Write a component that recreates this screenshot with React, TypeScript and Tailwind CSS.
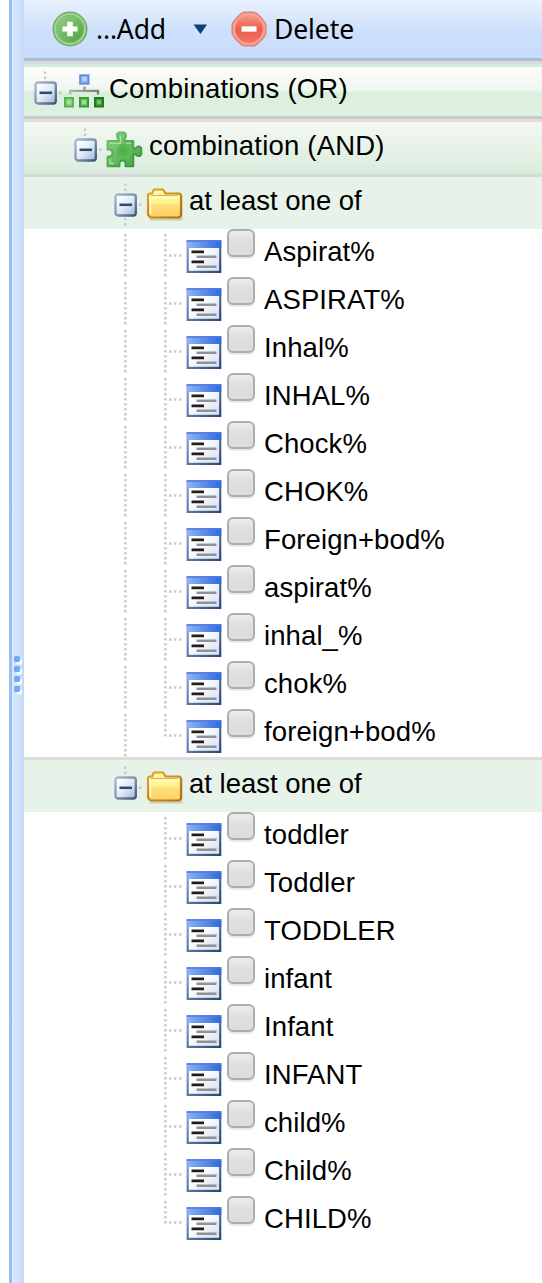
import React from "react";

const choking = [
  "Aspirat%",
  "ASPIRAT%",
  "Inhal%",
  "INHAL%",
  "Chock%",
  "CHOK%",
  "Foreign+bod%",
  "aspirat%",
  "inhal_%",
  "chok%",
  "foreign+bod%",
];

const children = [
  "toddler",
  "Toddler",
  "TODDLER",
  "infant",
  "Infant",
  "INFANT",
  "child%",
  "Child%",
  "CHILD%",
];

function Gradients() {
  return (
    <svg width="0" height="0" className="absolute" aria-hidden="true">
      <defs>
        <linearGradient id="box" x1="0" y1="0" x2="1" y2="1">
          <stop offset="0.1" stopColor="#ffffff" />
          <stop offset="0.5" stopColor="#e4ebf7" />
          <stop offset="1" stopColor="#9db4da" />
        </linearGradient>
        <linearGradient id="boxEdge" x1="0" y1="0" x2="1" y2="1">
          <stop offset="0" stopColor="#a9b8cf" />
          <stop offset="0.5" stopColor="#7e93b2" />
          <stop offset="1" stopColor="#3a557b" />
        </linearGradient>
        <linearGradient id="folder" x1="0" y1="0" x2="0" y2="1">
          <stop offset="0" stopColor="#fffdb0" />
          <stop offset="0.5" stopColor="#fff08a" />
          <stop offset="0.55" stopColor="#ffdf7b" />
          <stop offset="1" stopColor="#ffcf63" />
        </linearGradient>
        <linearGradient id="folderEdge" x1="0" y1="0" x2="1" y2="1">
          <stop offset="0" stopColor="#dfaa2c" />
          <stop offset="1" stopColor="#ad6e08" />
        </linearGradient>
        <linearGradient id="title" x1="0" y1="0" x2="1" y2="0">
          <stop offset="0" stopColor="#8fb3f8" />
          <stop offset="1" stopColor="#2f67dc" />
        </linearGradient>
        <linearGradient id="sheet" x1="0" y1="0" x2="1" y2="1">
          <stop offset="0.4" stopColor="#ffffff" />
          <stop offset="1" stopColor="#cfdcf4" />
        </linearGradient>
        <linearGradient id="sheetEdge" x1="0" y1="0" x2="1" y2="1">
          <stop offset="0" stopColor="#89a8da" />
          <stop offset="1" stopColor="#2a486f" />
        </linearGradient>
        <linearGradient id="puzzle" x1="0" y1="0" x2="1" y2="1">
          <stop offset="0" stopColor="#8bd486" />
          <stop offset="1" stopColor="#43a33f" />
        </linearGradient>
        <radialGradient id="puzzleCore">
          <stop offset="0" stopColor="#49ad43" />
          <stop offset="1" stopColor="#62ba5c" />
        </radialGradient>
        <linearGradient id="puzzleEdge" x1="0" y1="0" x2="1" y2="1">
          <stop offset="0" stopColor="#76c472" />
          <stop offset="1" stopColor="#2d8c31" />
        </linearGradient>
        <linearGradient id="add" x1="0" y1="0" x2="1" y2="1">
          <stop offset="0" stopColor="#98cf86" />
          <stop offset="1" stopColor="#4ba43d" />
        </linearGradient>
        <linearGradient id="remove" x1="0" y1="0" x2="0" y2="1">
          <stop offset="0" stopColor="#f59b87" />
          <stop offset="0.5" stopColor="#ec5c4a" />
          <stop offset="1" stopColor="#ef7464" />
        </linearGradient>
        <linearGradient id="wire" gradientUnits="userSpaceOnUse" x1="5" y1="0" x2="36" y2="0">
          <stop offset="0" stopColor="#b4b6b3" />
          <stop offset="1" stopColor="#777a76" />
        </linearGradient>
      </defs>
    </svg>
  );
}

function AddIcon() {
  return (
    <svg width="36" height="36" viewBox="0 0 36 36" className="shrink-0">
      <circle cx="18" cy="18" r="16.7" fill="#a5d298" stroke="#6eae60" strokeWidth="1.6" />
      <circle cx="18" cy="18" r="13.8" fill="url(#add)" stroke="#7fbd70" strokeWidth="0.8" />
      <path d="M15.2 10.700h5.600v4.700h4.700v5.200h-4.700v4.700h-5.600v-4.700h-4.700v-5.200h4.700z" fill="#fff" />
    </svg>
  );
}

function DeleteIcon() {
  return (
    <svg width="36" height="36" viewBox="0 0 36 36" className="shrink-0">
      <path d="M13 1.200h10q3 1 6.500 4.700t5.300 7.100v10q-1.800 3.500-5.300 7.100t-6.500 4.700H13q-3-1-6.500-4.700T1.200 23V13q1.800-3.500 5.300-7.100T13 1.200z" fill="#f2a396" stroke="#df8475" strokeWidth="1.500" />
      <circle cx="18" cy="18" r="13.800" fill="url(#remove)" />
      <rect x="10.500" y="15.300" width="15" height="5.400" fill="#fff" />
    </svg>
  );
}

function OrgIcon() {
  return (
    <svg width="42" height="36" viewBox="0 0 42 36" className="mt-[10px] shrink-0">
      <path d="M6.200 20.500v-3.700h27.800v3.700M20.300 13v3" fill="none" stroke="url(#wire)" strokeWidth="2.300" />
      <path d="M19 12.800h2.800v3h-2.800z" fill="#a1a3a0" />
      <rect x="16" y="1.200" width="8.600" height="8.600" fill="#84b2ee" stroke="#5a8fdd" strokeWidth="1.700" />
      <rect x="18.300" y="3" width="4" height="4" fill="#bdd7fa" />
      <rect x="0.900" y="23.900" width="8.200" height="8.700" fill="#83cf79" stroke="#55b24e" strokeWidth="1.800" />
      <rect x="15.900" y="23.900" width="8.200" height="8.700" fill="#68bd61" stroke="#349b34" strokeWidth="1.800" />
      <rect x="30.900" y="23.900" width="8.200" height="8.700" fill="#3d9c3b" stroke="#187b1e" strokeWidth="1.800" />
      <path d="M3 26.300h4v4h-4zM18 26.300h4v4h-4z" fill="#b8e3ae" fillOpacity="0.75" />
      <path d="M33 26.300h4v4h-4z" fill="#8ccb82" fillOpacity="0.75" />
    </svg>
  );
}

function PuzzleIcon() {
  return (
    <svg width="37" height="37" viewBox="0 0 37 37" className="mt-[9px] shrink-0">
      <path
        d="M1.500 10H12.500V8.500Q11 7 11 5V3L12.500 1.500H18L19.800 3V5Q19.800 7 18.500 8.500V10H27.300V17.500H29.500Q30.500 15.500 32.500 15.500H34L35.300 17V23.500L34 25H32.500Q30.500 25 29.500 23.500H27.300V35.300H19.500V32.500Q19.500 29.500 16.500 29.500Q13.500 29.500 13.500 32.500V35.300H1.500V25.500H3.500Q6.500 25 6.500 22Q6.500 18.500 3.500 18.500H1.500Z"
        fill="url(#puzzle)"
        stroke="url(#puzzleEdge)"
        strokeWidth="1.900"
        strokeLinejoin="round"
      />
      <circle cx="17.500" cy="20" r="7.500" fill="url(#puzzleCore)" />
      <path d="M3.500 12.300H14.500V5M4 28v4.500h4M20.500 12.300h4.500" fill="none" stroke="#a7e19e" strokeWidth="1.300" />
    </svg>
  );
}

function FolderIcon() {
  return (
    <svg width="38" height="34" viewBox="0 0 38 34" className="mt-[11px] shrink-0">
      <path d="M4 31.500h31.500V8" fill="none" stroke="#8b7853" strokeOpacity="0.3" strokeWidth="2" />
      <path
        d="M2 27V6.500L4 5.500H6L8 1.500H17L19.500 5.500H33.500L35 7V27.500L33 29.500H4.500Z"
        fill="url(#folder)"
        stroke="url(#folderEdge)"
        strokeWidth="2.200"
        strokeLinejoin="round"
      />
      <path d="M5 7.500H32" stroke="#e5b53e" strokeWidth="1.200" />
      <path d="M4.500 26V9.500H32.500" fill="none" stroke="#fffde0" strokeWidth="1.400" />
      <path d="M8.500 4.300H17" stroke="#fff4b0" strokeWidth="2" />
    </svg>
  );
}

function LeafIcon() {
  return (
    <svg width="36" height="34" viewBox="0 0 36 34" className="mt-[11px] shrink-0">
      <rect x="1.700" y="1.200" width="32.500" height="30.700" fill="url(#sheet)" stroke="url(#sheetEdge)" strokeWidth="2.200" />
      <rect x="0.600" y="0.500" width="34.700" height="7.500" fill="url(#title)" />
      <path d="M0.600 1H35.300" stroke="#4b7ee0" strokeWidth="1.300" />
      <path d="M5.500 11.800h12.500M5.500 21.800h12.500" stroke="#202020" strokeWidth="2.800" />
      <path d="M10.500 16.800h20M10.500 26.800h20" stroke="#929292" strokeWidth="2.500" />
    </svg>
  );
}

function MinusBox({ x, y }: { x: number; y: number }) {
  return (
    <g transform={`translate(${x} ${y})`}>
      <rect x="1.500" y="1.500" width="20.300" height="21" rx="2.500" fill="url(#box)" stroke="url(#boxEdge)" strokeWidth="2.300" />
      <path d="M5.500 11.800h12.500" stroke="#2b4a70" strokeWidth="2.500" />
    </g>
  );
}

function Dots({ d }: { d: string }) {
  return <path d={d} fill="none" stroke="#cacaca" strokeWidth="2.400" strokeDasharray="2.400 2.600" />;
}

function Checkbox() {
  return (
    <span
      role="checkbox"
      aria-checked="false"
      className="ml-[5px] h-7 w-7 shrink-0 rounded-[6px] border-2 border-[#adadad] bg-linear-to-b from-[#ececec] via-[#dedede] to-[#dddddd] shadow-[0_2px_1px_#e7e7e7]"
    />
  );
}

function LeafRow({ label, last, outer }: { label: string; last: boolean; outer: boolean }) {
  return (
    <div className="flex h-12 items-start">
      <svg width="162" height="48" className="shrink-0">
        {outer && <Dots d="M101.300 5V48" />}
        <Dots d={last ? "M141.300 5V28" : "M141.300 5V48"} />
        <Dots d="M145 26.500H158" />
      </svg>
      <LeafIcon />
      <Checkbox />
      <span className="ml-[9px] mt-[7px] whitespace-nowrap tracking-[0.100px]">{label}</span>
    </div>
  );
}

function FolderRow({ open }: { open: boolean }) {
  return (
    <div className="flex h-[52px] items-start bg-[#e7f3e9]">
      <svg width="122" height="52" className="shrink-0">
        <Dots d="M101.300 6.500V15" />
        {open && <Dots d="M101.300 41V50" />}
        <rect x="115" y="26.500" width="2.500" height="2.500" fill="#c6c6c6" />
        <MinusBox x={90} y={16} />
      </svg>
      <FolderIcon />
      <span className="ml-[5px] mt-[8px] whitespace-nowrap">at least one of</span>
    </div>
  );
}

export default function App() {
  return (
    <div className="flex h-[1283px] w-[542px] overflow-hidden bg-white pl-[9px] font-['Liberation_Sans',Arial,sans-serif] text-[27.5px] leading-8 text-black">
      <Gradients />
      <div className="flex w-[15px] shrink-0 items-center border-l-[3px] border-[#99bff2] bg-linear-to-r from-[#dce9fd] to-[#c3d8f8]">
        <svg width="12" height="42" className="mt-[67px]">
          {[2, 12, 22, 32].map((y) => (
            <g key={y}>
              <rect x="4.500" y={y + 3} width="5.500" height="5.500" rx="1.500" fill="#f7faff" />
              <rect x="2" y={y} width="6" height="6" rx="1.500" fill="#72a9f2" />
            </g>
          ))}
        </svg>
      </div>
      <div className="min-w-0 flex-1">
        <div className="flex h-[61px] items-center border-b-[3px] border-[#a8bfd8] bg-linear-to-b from-[#e8f1fe] via-[#cee0fb] via-55% to-[#c8dcfa] font-['Noto_Sans',sans-serif] text-[26.5px]">
          <div className="ml-7 flex items-center">
            <AddIcon />
            <span className="ml-2 w-[70px] whitespace-nowrap tracking-[-0.150px]">...Add</span>
            <svg width="15" height="11" className="ml-[27px]">
              <path d="M0.500 0.500H14L7.500 10z" fill="#0b427a" />
            </svg>
          </div>
          <div className="ml-[23px] flex items-center">
            <DeleteIcon />
            <span className="ml-[7px] tracking-[-0.100px]">Delete</span>
          </div>
        </div>
        <div className="flex h-[58px] items-start border-t-[3px] border-b-[3px] border-t-[#d7dcda] border-b-[#c9c9c9] bg-[linear-gradient(#d3edda_0px,#d3edda_3px,#fcfdfb_3px,#f0f7ef_26px,#d9efdb_29px,#dff1e0_52px)]">
          <svg width="40" height="52" className="shrink-0">
            <Dots d="M21 7.500V16" />
            <rect x="35" y="27.500" width="2.500" height="2.500" fill="#c6c6c6" />
            <MinusBox x={10} y={17} />
          </svg>
          <OrgIcon />
          <span className="ml-[3px] mt-[9px] whitespace-nowrap tracking-[0.200px]">Combinations (OR)</span>
        </div>
        <div className="flex h-[58px] items-start border-t-[3px] border-b-[3px] border-t-[#dddddd] border-b-[#d9d9d9] bg-linear-to-b from-[#f4f9f3] to-[#d9ecdc]">
          <svg width="82" height="52" className="shrink-0">
            <Dots d="M61 6.500V15" />
            <rect x="75" y="26.500" width="2.500" height="2.500" fill="#c6c6c6" />
            <MinusBox x={50} y={16} />
          </svg>
          <PuzzleIcon />
          <span className="ml-[6px] mt-[8px] whitespace-nowrap tracking-[0.200px]">combination (AND)</span>
        </div>
        <FolderRow open />
        {choking.map((label, i) => (
          <LeafRow key={label} label={label} last={i === choking.length - 1} outer />
        ))}
        <div className="h-[3px] bg-[#dcdcdc]" />
        <FolderRow open={false} />
        {children.map((label, i) => (
          <LeafRow key={label} label={label} last={i === children.length - 1} outer={false} />
        ))}
      </div>
    </div>
  );
}
